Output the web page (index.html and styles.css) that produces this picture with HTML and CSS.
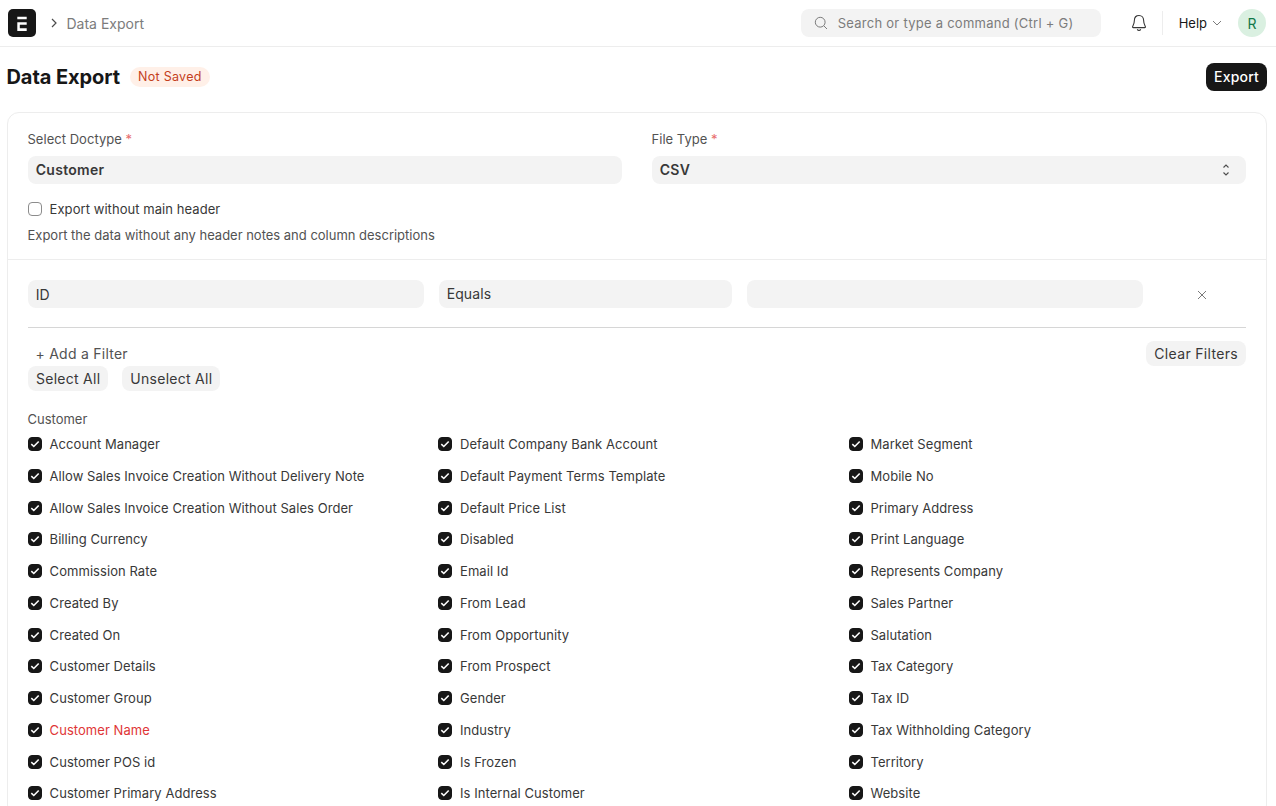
FILE: index.html
```html
<!DOCTYPE html>
<html lang="en">
<head>
    <meta charset="UTF-8">
    <title>Data Export</title>
    <link rel="stylesheet" href="styles.css">
</head>
<body>
    <header class="navbar">
        <div class="logo">
            <svg width="16" height="16" viewBox="0 0 16 16"><path d="M3.300 1.700h9.400v2.600H3.300zM3.300 7.300h9.400v2.400H5.800v3.600h6.900V16H3.300z" fill="#fff"/></svg>
        </div>
        <svg class="crumb-arrow" width="8" height="10" viewBox="0 0 8 10"><path d="M2 1l4 4-4 4" fill="none" stroke="#4c4c4c" stroke-width="1.200"/></svg>
        <span class="crumb">Data Export</span>
        <div class="search">
            <svg width="14" height="14" viewBox="0 0 14 14"><circle cx="6.200" cy="6.200" r="4.900" fill="none" stroke="#7c7c7c" stroke-width="1"/><path d="M9.800 9.800l3.200 3.200" stroke="#7c7c7c" stroke-width="1"/></svg>
            <span>Search or type a command (Ctrl + G)</span>
        </div>
        <svg class="bell" width="16" height="18" viewBox="0 0 16 18"><path d="M8 1.500c-2.800 0-4.600 2-4.600 4.800 0 3.800-1.900 5.700-1.900 6.700 0 .4.300.6.700.6h11.600c.4 0 .7-.2.700-.6 0-1-1.900-2.900-1.900-6.700C12.600 3.500 10.800 1.500 8 1.500z" fill="none" stroke="#383838" stroke-width="1.100"/><path d="M6.300 15.200c.3.800.9 1.200 1.700 1.200s1.400-.4 1.700-1.200" fill="none" stroke="#383838" stroke-width="1.100"/></svg>
        <div class="nav-divider"></div>
        <span class="help">Help</span>
        <svg class="help-arrow" width="10" height="6" viewBox="0 0 10 6"><path d="M1 1l4 4 4-4" fill="none" stroke="#7c7c7c" stroke-width="1"/></svg>
        <div class="avatar">R</div>
    </header>

    <div class="page-head">
        <h1>Data Export</h1>
        <span class="badge">Not Saved</span>
        <button class="btn-primary">Export</button>
    </div>

    <main class="card">
        <section class="form-section">
            <div class="form-grid">
                <div class="field">
                    <label>Select Doctype <span class="req">*</span></label>
                    <div class="input strong">Customer</div>
                </div>
                <div class="field">
                    <label>File Type <span class="req">*</span></label>
                    <div class="input strong select">CSV
                        <svg width="10" height="14" viewBox="0 0 10 14"><path d="M2.500 4.500L5 2l2.500 2.500M2.500 9.500L5 12l2.500-2.500" fill="none" stroke="#4c4c4c" stroke-width="1.100"/></svg>
                    </div>
                </div>
            </div>
            <div class="check-line">
                <span class="box"></span>
                <span>Export without main header</span>
            </div>
            <p class="help-text">Export the data without any header notes and column descriptions</p>
        </section>

        <section class="fields-section">
            <div class="filter-row">
                <div class="input f1"><span class="id-text">ID</span></div>
                <div class="input f2">Equals</div>
                <div class="input f3"></div>
                <svg class="remove" width="10" height="10" viewBox="0 0 10 10"><path d="M1 1l8 8M9 1l-8 8" stroke="#6b6b6b" stroke-width="0.900"/></svg>
            </div>
            <div class="filter-actions">
                <span class="add-filter">+ Add a Filter</span>
                <button class="btn">Clear Filters</button>
            </div>
            <div class="select-actions">
                <button class="btn">Select All</button>
                <button class="btn">Unselect All</button>
            </div>
            <div class="group-title">Customer</div>
            <div class="columns" id="columns"></div>
        </section>
    </main>

    <script>
        // Columns fill top to bottom, same as the doctype field list
        const fields = [
            'Account Manager', 'Allow Sales Invoice Creation Without Delivery Note',
            'Allow Sales Invoice Creation Without Sales Order', 'Billing Currency',
            'Commission Rate', 'Created By', 'Created On', 'Customer Details',
            'Customer Group', 'Customer Name', 'Customer POS id', 'Customer Primary Address',
            'Default Company Bank Account', 'Default Payment Terms Template', 'Default Price List',
            'Disabled', 'Email Id', 'From Lead', 'From Opportunity', 'From Prospect',
            'Gender', 'Industry', 'Is Frozen', 'Is Internal Customer',
            'Market Segment', 'Mobile No', 'Primary Address', 'Print Language',
            'Represents Company', 'Sales Partner', 'Salutation', 'Tax Category',
            'Tax ID', 'Tax Withholding Category', 'Territory', 'Website'
        ];
        const tick = '<svg width="10" height="8" viewBox="0 0 10 8"><path d="M1.300 4.200l2.500 2.300 4.900-5" fill="none" stroke="#fff" stroke-width="1.600"/></svg>';
        const columns = document.getElementById('columns');
        for (const name of fields) {
            const row = document.createElement('div');
            row.className = name === 'Customer Name' ? 'col-item mandatory' : 'col-item';
            row.innerHTML = '<span class="box checked">' + tick + '</span><span>' + name + '</span>';
            columns.appendChild(row);
        }
    </script>
</body>
</html>
```

FILE: styles.css
```css
* { box-sizing: border-box; }
html, body { height: 100%; overflow: hidden; }
body { margin: 0; background-color: #fff; color: #383838; font-family: Inter, "Liberation Sans", sans-serif; font-size: 13px; }
button { font-family: inherit; border: none; cursor: pointer; }

.navbar { height: 47px; display: flex; align-items: center; padding: 0 10px 0 8px; border-bottom: 1px solid #ededed; }
.logo { width: 28px; height: 28px; background-color: #171717; border-radius: 5px; display: flex; align-items: center; justify-content: center; }
.crumb-arrow { margin-left: 14px; }
.crumb { margin-left: 8.500px; font-size: 14px; color: #7c7c7c; }
.search { margin-left: auto; width: 300px; height: 28px; background-color: #f3f3f3; border-radius: 8px; display: flex; align-items: center; gap: 10px; padding-left: 13px; color: #7c7c7c; letter-spacing: 0.26px; }
.bell { margin-left: 30px; }
.nav-divider { width: 1px; height: 24px; background-color: #ededed; margin-left: 15px; }
.help { margin-left: 16px; color: #171717; }
.help-arrow { margin-left: 5px; }
.avatar { width: 28px; height: 28px; margin-left: 16px; border-radius: 50%; background-color: #daf0e1; color: #137949; display: flex; align-items: center; justify-content: center; font-size: 14px; }

.page-head { height: 59px; margin-bottom: 6px; display: flex; align-items: center; padding: 0 9px 0 6.500px; }
.page-head h1 { margin: 0; font-size: 20px; font-weight: 700; color: #171717; letter-spacing: -0.07px; }
.badge { margin-left: 10px; height: 20px; padding: 0 8px; border-radius: 10px; background-color: #fff0e8; color: #c4401c; font-size: 12.500px; line-height: 20px; letter-spacing: 0.28px; }
.btn-primary { margin-left: auto; height: 28px; width: 61px; padding: 0; border-radius: 8px; background-color: #171717; color: #fff; font-size: 14px; font-weight: 500; letter-spacing: 0.2px; }

.card { margin: 0 9px 0 7px; border: 1px solid #ededed; border-radius: 12px; }
.form-section { padding: 18px 20px 16px; border-bottom: 1px solid #ededed; }
.form-grid { display: grid; grid-template-columns: 1fr 1fr; gap: 30px; }
.field label { display: block; height: 16px; margin-bottom: 9px; margin-left: -0.500px; line-height: 16px; color: #525252; letter-spacing: 0.03px; }
.req { color: #e86c6c; }
.input { height: 28px; background-color: #f3f3f3; border-radius: 8px; padding: 0 7.700px; display: flex; align-items: center; font-size: 14px; color: #383838; letter-spacing: 0.1px; }
.input.strong { font-weight: 600; padding-bottom: 1px; letter-spacing: 0.3px; }
.input.select { justify-content: space-between; padding-right: 15px; }
.check-line { display: flex; align-items: center; gap: 7.600px; margin-top: 17px; height: 16px; letter-spacing: 0.06px; }
.box { width: 14px; height: 14px; border-radius: 4px; border: 1px solid #8c8c8c; display: flex; align-items: center; justify-content: center; flex-shrink: 0; background-color: #fff; }
.box.checked { background-color: #171717; border-color: #171717; }
.help-text { margin: 10px 0 0 -0.500px; line-height: 16px; color: #525252; letter-spacing: -0.01px; }

.fields-section { padding: 20px 20px 0; }
.filter-row { display: flex; align-items: center; height: 48px; padding-bottom: 20px; gap: 15px; border-bottom: 1px solid #d6d6d6; }
.f1 { width: 396px; }
.f2 { width: 293px; }
.f3 { width: 396px; }
.id-text { padding-top: 2px; }
.remove { margin-left: 39px; margin-top: 2px; }
.filter-actions { display: flex; align-items: center; justify-content: space-between; margin-top: 13px; height: 25px; }
.add-filter { margin-left: 7.500px; font-size: 14px; color: #525252; letter-spacing: 0.25px; }
.btn { height: 25px; padding: 0 8px; border-radius: 8px; background-color: #f3f3f3; color: #383838; font-size: 14px; letter-spacing: 0.32px; }
.select-actions { display: flex; gap: 14px; }
.select-actions .btn { letter-spacing: 0.27px; }
.group-title { margin-top: 20px; margin-left: -0.500px; height: 16px; line-height: 16px; color: #525252; }
.columns { display: grid; grid-template-rows: repeat(12, 31.770px); grid-auto-flow: column; grid-auto-columns: 410.450px; margin-top: 8px; }
.col-item { display: flex; align-items: center; gap: 7.600px; height: 16px; margin-top: 1px; letter-spacing: 0.06px; }
.mandatory { color: #e03636; }
```
